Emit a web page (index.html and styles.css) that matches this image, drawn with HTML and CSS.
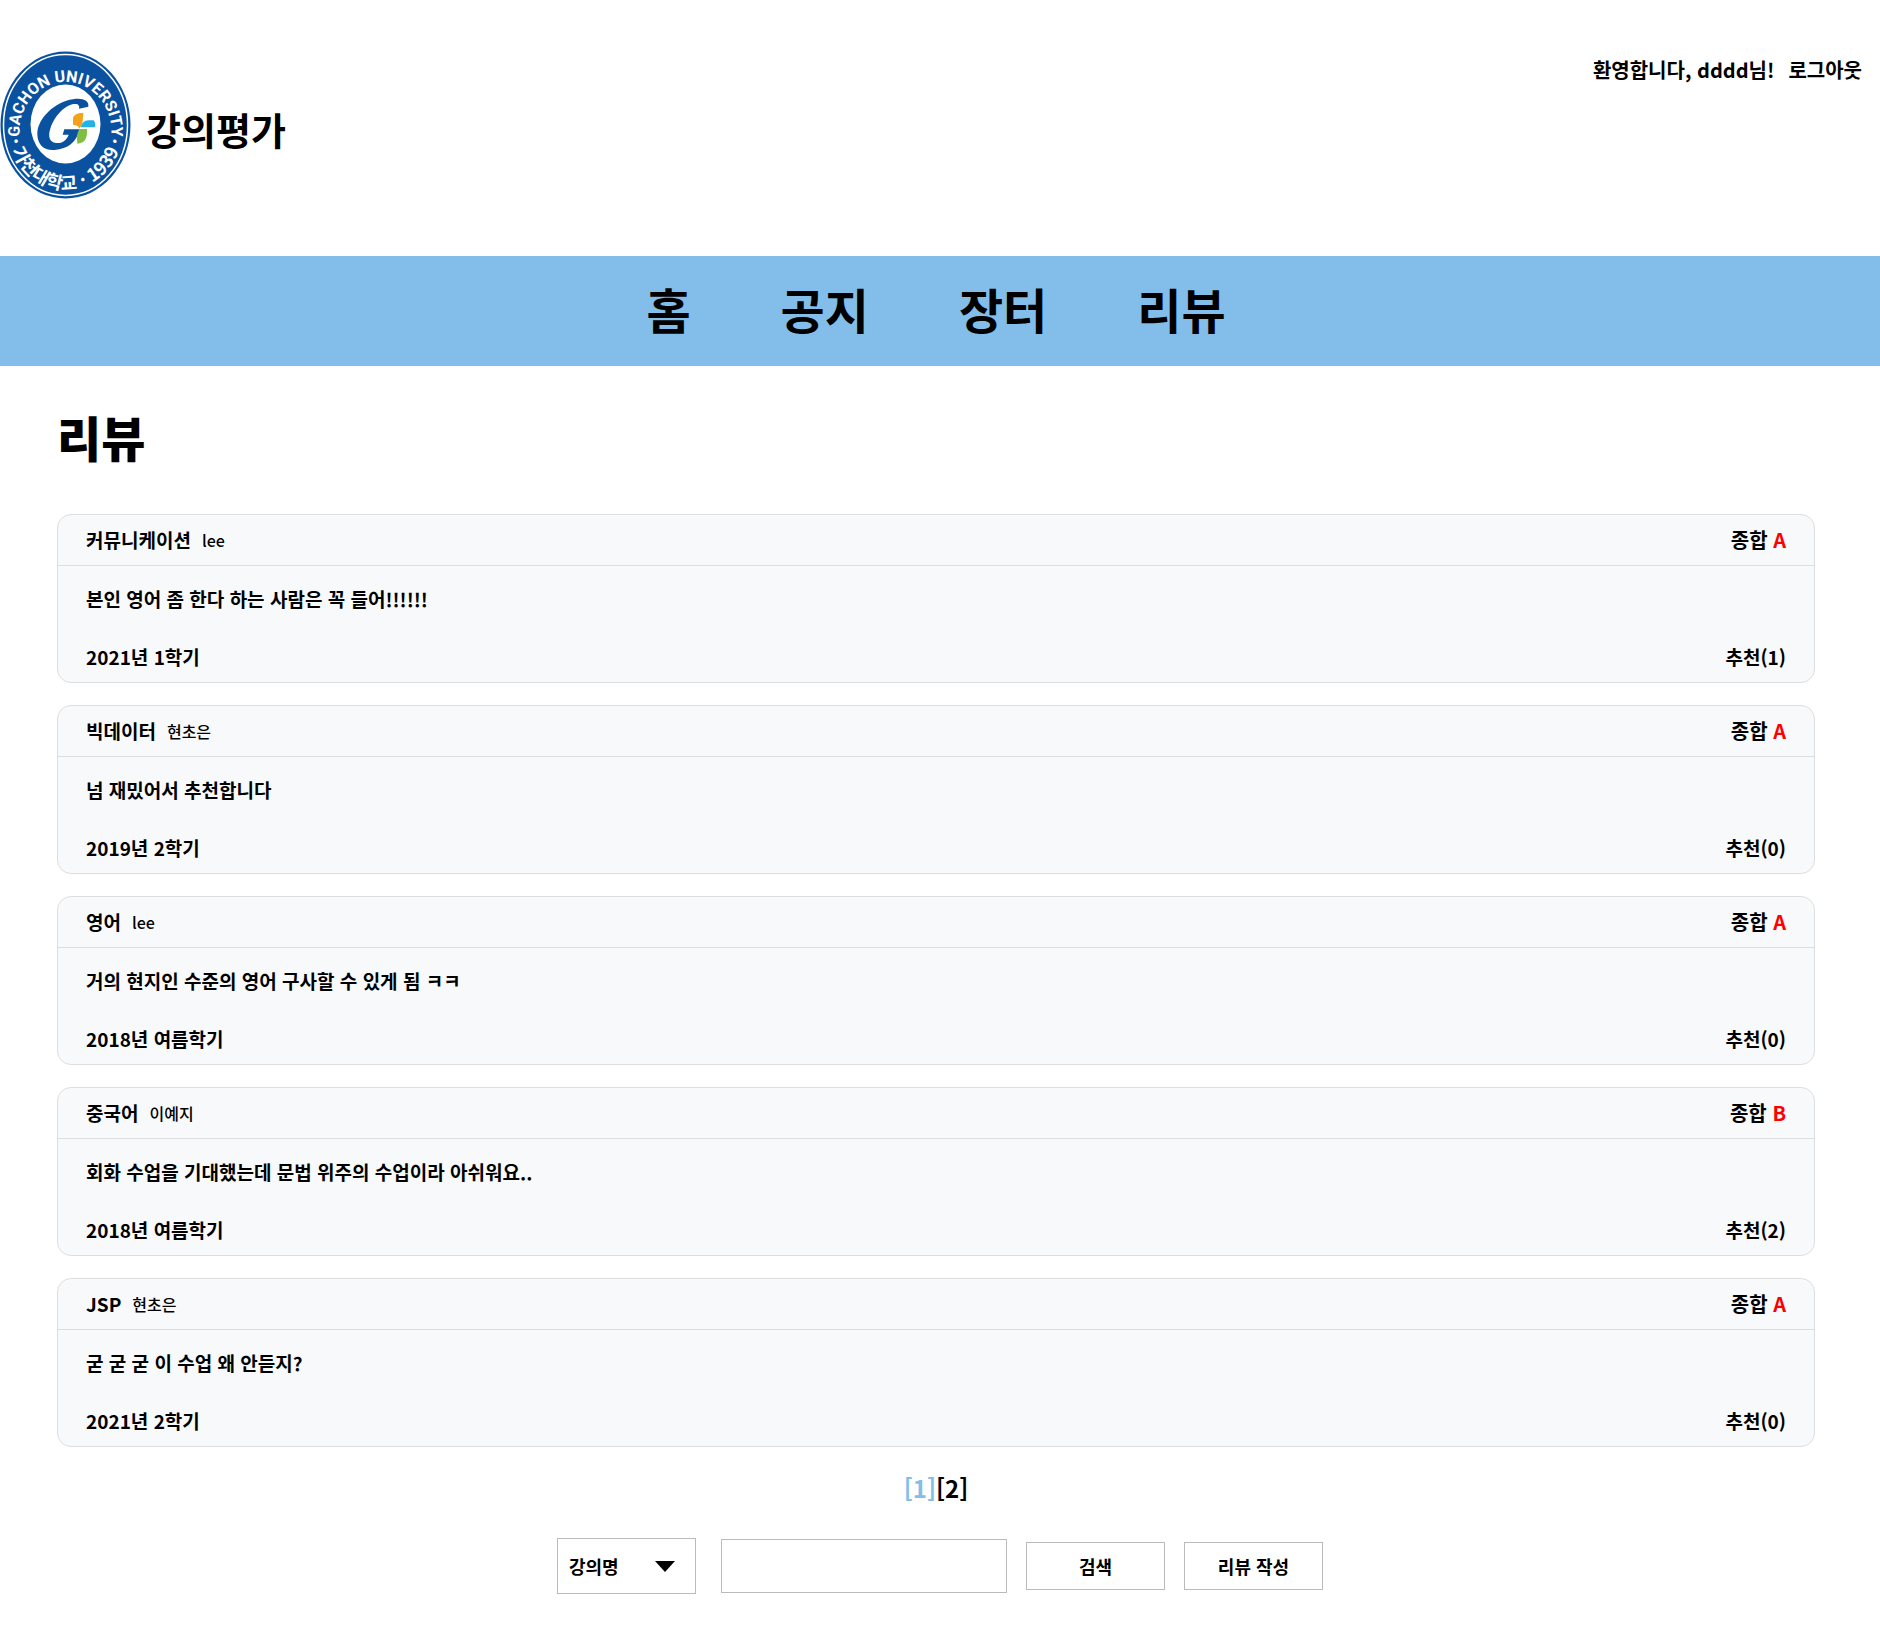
FILE: index.html
```html
<!DOCTYPE html>
<html lang="ko">
<head>
<meta charset="utf-8">
<title>강의평가 - 리뷰</title>
<link rel="stylesheet" href="styles.css">
</head>
<body>
<header class="site-header">
  <a class="brand" href="#">
    <svg class="logo" viewBox="0 0 132 150" role="img" aria-label="가천대학교">
      <defs>
        <path id="arc-top" d="M23 101 A46 50 0 1 1 108 101"/>
        <path id="arc-bottom" d="M8 85 A58 63 0 0 0 123 85"/>
      </defs>
      <ellipse cx="65.500" cy="75" rx="65" ry="73.500" fill="#0a529f"/>
      <ellipse cx="65.500" cy="75" rx="62" ry="70.500" fill="none" stroke="#fff" stroke-width="1.500"/>
      <ellipse cx="65.500" cy="74" rx="35" ry="39.500" fill="#fff"/>
      <text class="logo-latin"><textPath href="#arc-top" startOffset="50%" text-anchor="middle">GACHON UNIVERSITY</textPath></text>
      <text class="logo-korean"><textPath href="#arc-bottom" startOffset="50%" text-anchor="middle">· 가천대학교 · 1939 ·</textPath></text>
      <g transform="translate(0 -20) scale(.3333)">
        <path fill="#0a529f" d="M265 230C268 212 248 203 219 208C165 215 112 266 112 312C112 345 134 363 164 360C204 356 228 340 239 298H193L188 314H206C200 332 184 341 168 339C149 336 143 320 151 296C162 261 192 226 222 222C234 220 240 227 237 236Z"/>
        <path fill="#f5a21b" d="M219 268Q219 248 250 248L248 274Q246 288 238 296Q236 286 219 284Z"/>
        <path fill="#24b2e8" d="M242 292Q246 272 266 271H281Q288 280 285 292Z"/>
        <path fill="#80be42" d="M261 297Q264 340 232 341L231 325Q231 305 240 297Z"/>
      </g>
    </svg>
    <span class="brand-name">강의평가</span>
  </a>
  <div class="account"><span>환영합니다, dddd님!</span><a href="#">로그아웃</a></div>
</header>
<nav class="main-nav">
  <a href="#">홈</a><a href="#">공지</a><a href="#">장터</a><a href="#">리뷰</a>
</nav>
<main class="content">
  <h1 class="page-title">리뷰</h1>
  <div class="reviews">
    <article class="review">
      <header class="review-head"><h2 class="course">커뮤니케이션</h2><span class="professor">lee</span><span class="score">종합 <span class="grade">A</span></span></header>
      <p class="comment">본인 영어 좀 한다 하는 사람은 꼭 들어!!!!!!</p>
      <footer class="review-foot"><span>2021년 1학기</span><a href="#">추천(1)</a></footer>
    </article>
    <article class="review">
      <header class="review-head"><h2 class="course">빅데이터</h2><span class="professor">현초은</span><span class="score">종합 <span class="grade">A</span></span></header>
      <p class="comment">넘 재밌어서 추천합니다</p>
      <footer class="review-foot"><span>2019년 2학기</span><a href="#">추천(0)</a></footer>
    </article>
    <article class="review">
      <header class="review-head"><h2 class="course">영어</h2><span class="professor">lee</span><span class="score">종합 <span class="grade">A</span></span></header>
      <p class="comment">거의 현지인 수준의 영어 구사할 수 있게 됨 ㅋㅋ</p>
      <footer class="review-foot"><span>2018년 여름학기</span><a href="#">추천(0)</a></footer>
    </article>
    <article class="review">
      <header class="review-head"><h2 class="course">중국어</h2><span class="professor">이예지</span><span class="score">종합 <span class="grade">B</span></span></header>
      <p class="comment">회화 수업을 기대했는데 문법 위주의 수업이라 아쉬워요..</p>
      <footer class="review-foot"><span>2018년 여름학기</span><a href="#">추천(2)</a></footer>
    </article>
    <article class="review">
      <header class="review-head"><h2 class="course">JSP</h2><span class="professor">현초은</span><span class="score">종합 <span class="grade">A</span></span></header>
      <p class="comment">굳 굳 굳 이 수업 왜 안듣지?</p>
      <footer class="review-foot"><span>2021년 2학기</span><a href="#">추천(0)</a></footer>
    </article>
  </div>
  <nav class="pages" aria-label="페이지"><a class="current" href="#" aria-current="page">[1]</a><a href="#">[2]</a></nav>
</main>
<form class="search">
  <select class="field" aria-label="검색 기준"><option>강의명</option></select>
  <input class="keyword" type="text" aria-label="검색어">
  <button class="action" type="submit">검색</button>
  <button class="action" type="button">리뷰 작성</button>
</form>
</body>
</html>
```
FILE: styles.css
```css
* { box-sizing: border-box; }
body {
  margin: 0;
  background: #fff;
  color: #000;
  font-family: "Noto Sans CJK KR", sans-serif;
  font-weight: 700;
  font-size: 19px;
  line-height: 30px;
}
a { color: inherit; text-decoration: none; }
h1, h2, p { margin: 0; }

.site-header {
  display: flex;
  justify-content: space-between;
  align-items: flex-start;
  padding: 50px 18px 56px 0;
}
.brand { display: flex; align-items: center; gap: 14px; }
.logo { display: block; width: 132px; height: 150px; }
.logo text { fill: #fff; font-weight: 700; }
.logo-latin { font-family: Roboto, sans-serif; font-size: 16px; }
.logo-korean { font-size: 18px; }
.brand-name { font-size: 38px; line-height: 56px; padding-top: 8px; }
.account { display: flex; gap: 14px; padding-top: 5px; font-size: 20px; }

.main-nav {
  display: flex;
  justify-content: center;
  gap: 90px;
  padding: 16px 8px 22px 0;
  background: #82bee9;
  font-size: 48px;
  line-height: 72px;
}

.content { padding: 34px 65px 0 57px; }
.page-title { font-size: 48px; font-weight: 900; line-height: 72px; }
.reviews { display: flex; flex-direction: column; gap: 22px; margin-top: 42px; }
.review {
  background: #f8f9fb;
  border: 1px solid #dcdedf;
  border-radius: 14px;
}
.review-head {
  display: flex;
  align-items: center;
  padding: 10px 28px;
  border-bottom: 1px solid #dcdedf;
}
.course { font-size: 19px; line-height: 30px; }
.professor { margin-left: 11px; font-size: 16px; font-weight: 500; }
.score { margin-left: auto; font-size: 20px; }
.grade { color: #f00; }
.comment { padding: 18px 28px 0; }
.review-foot { display: flex; justify-content: space-between; padding: 28px 28px 10px; }

.pages { display: flex; justify-content: center; margin-top: 23px; font-size: 24px; line-height: 36px; }
.current { color: #82bee9; }

.search { display: flex; justify-content: center; align-items: center; gap: 19px; padding: 32px 0; }
.search select, .search input, .search button {
  border: 1px solid #bbb;
  border-radius: 0;
  background-color: #fff;
  color: #000;
  font: inherit;
  font-size: 18px;
}
.search .field {
  width: 139px;
  height: 56px;
  margin-right: 6px;
  padding: 0 11px;
  appearance: none;
  background-image: url("data:image/svg+xml,%3Csvg xmlns='http://www.w3.org/2000/svg' viewBox='0 0 20 11'%3E%3Cpath d='M0 0H20L10 11Z'/%3E%3C/svg%3E");
  background-repeat: no-repeat;
  background-position: right 20px center;
  background-size: 20px 11px;
}
.search .keyword { width: 286px; height: 54px; padding: 0 12px; }
.search .action { width: 139px; height: 48px; padding: 0; }
```
